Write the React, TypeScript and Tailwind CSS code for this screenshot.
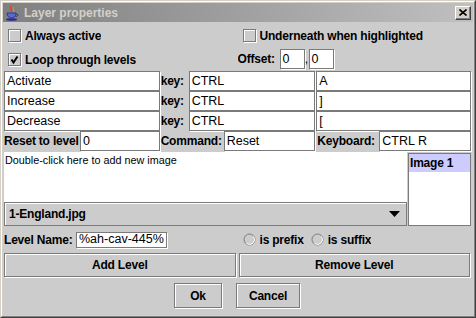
import React from 'react';

const field = 'border border-[#7a7a7a] bg-white shadow-[1px_1px_0_#ffffff] px-[2px] text-[12.5px] leading-none flex items-center overflow-hidden whitespace-nowrap';
const label = 'font-bold text-[12px] tracking-[-0.2px] whitespace-nowrap overflow-hidden';

function CheckBox({ checked }: { checked?: boolean }) {
    return (
        <span className="relative inline-block w-[13px] h-[13px] shrink-0 border border-[#7a7a7a] bg-[#cccccc] shadow-[inset_1px_1px_0_#ffffff,1px_1px_0_#ffffff]">
            {checked && (
                <svg width="11" height="11" viewBox="0 0 11 11" className="absolute left-0 top-0">
                    <path d="M2.5 5.5 L4.5 8.5 L8.5 2.5" stroke="#000" strokeWidth="2" fill="none" />
                </svg>
            )}
        </span>
    );
}

function Radio() {
    return (
        <svg width="13" height="13" viewBox="0 0 13 13" className="shrink-0">
            <circle cx="6.5" cy="6.5" r="5.5" fill="#cccccc" stroke="#7a7a7a" strokeWidth="1" />
            <path d="M10.5 3.5 A5 5 0 0 1 3.5 10.5" stroke="#ffffff" strokeWidth="1" fill="none" />
        </svg>
    );
}

function Btn({ children, className }: { children: React.ReactNode; className?: string }) {
    return (
        <div className={`border border-[#7a7a7a] bg-[#cccccc] shadow-[inset_1px_1px_0_#ffffff,1px_1px_0_#ffffff] flex items-center justify-center font-bold text-[12px] tracking-[-0.2px] ${className ?? ''}`}>
            {children}
        </div>
    );
}

function JavaIcon() {
    return (
        <svg width="16" height="16" viewBox="0 0 16 16">
            <path d="M7 1 C5 3 9 4 7 7" stroke="#e04020" strokeWidth="1.4" fill="none" />
            <path d="M9.5 2 C8 4 11 5 9.5 7" stroke="#f08030" strokeWidth="1.2" fill="none" />
            <path d="M3 8 H12 C12 11 10 13 7.5 13 C5 13 3 11 3 8 Z" fill="#5a6ad0" stroke="#2a2a90" strokeWidth="0.8" />
            <path d="M12 9 C14.5 9 14.5 11.5 11.5 11.5" stroke="#2a2a90" strokeWidth="1" fill="none" />
            <ellipse cx="7.5" cy="14.5" rx="5.5" ry="1.2" fill="#2a2a90" />
        </svg>
    );
}

export default function App() {
    return (
        <div className="w-[476px] h-[318px] border border-t-[#d4d0c8] border-l-[#d4d0c8] border-r-[#404040] border-b-[#404040] bg-[#d4d0c8] overflow-hidden" style={{ fontFamily: '"Liberation Sans", Arial, sans-serif' }}>
            <div className="h-full border border-t-white border-l-white border-r-[#808080] border-b-[#808080] p-[1px] flex flex-col">
                {/* title bar */}
                <div className="h-[19px] shrink-0 bg-gradient-to-r from-[#808080] to-[#c0c0c0] flex items-center pl-[1px] pr-[2px]">
                    <JavaIcon />
                    <span className="ml-[4px] text-[12px] font-bold text-[#d4d0c8]">Layer properties</span>
                    <div className="ml-auto w-[16px] h-[14px] bg-[#d4d0c8] border border-t-white border-l-white border-r-[#404040] border-b-[#404040] shadow-[inset_-1px_-1px_0_#808080] flex items-center justify-center">
                        <svg width="8" height="7" viewBox="0 0 8 7">
                            <path d="M0.5 0.5 L7.5 6.5 M7.5 0.5 L0.5 6.5" stroke="#000" strokeWidth="1.6" />
                        </svg>
                    </div>
                </div>

                {/* content */}
                <div className="flex-1 bg-[#cccccc] pl-[1px] pr-[2px] flex flex-col text-black">
                    <div className="h-[26px] grid grid-cols-2 items-center">
                        <div className="flex items-center pl-[4px] gap-[4px] pt-[1px]">
                            <CheckBox />
                            <span className={label}>Always active</span>
                        </div>
                        <div className="flex items-center pl-[5px] gap-[4px] pt-[1px]">
                            <CheckBox />
                            <span className={label}>Underneath when highlighted</span>
                        </div>
                    </div>
                    <div className="h-[22px] grid grid-cols-2 items-center">
                        <div className="flex items-center pl-[4px] gap-[4px] pt-[1px]">
                            <CheckBox checked />
                            <span className={label}>Loop through levels</span>
                        </div>
                        <div className="flex items-center h-[20px]">
                            <span className={`${label} w-[42px]`}>Offset:</span>
                            <div className={`${field} w-[25px] h-[20px]`}>0</div>
                            <span className="w-[4px] text-[12px] text-center">,</span>
                            <div className={`${field} w-[25px] h-[20px]`}>0</div>
                        </div>
                    </div>

                    <div className="mt-[1px] grid grid-cols-3 grid-rows-[20px_20px_20px_20px]">
                        <div className={field}>Activate</div>
                        <div className="flex">
                            <span className={`${label} w-[29px] pl-[1px] flex items-center`}>key:</span>
                            <div className={`${field} flex-1`}>CTRL</div>
                        </div>
                        <div className={`${field} ml-[1px]`}>A</div>

                        <div className={field}>Increase</div>
                        <div className="flex">
                            <span className={`${label} w-[29px] pl-[1px] flex items-center`}>key:</span>
                            <div className={`${field} flex-1`}>CTRL</div>
                        </div>
                        <div className={`${field} ml-[1px]`}>]</div>

                        <div className={field}>Decrease</div>
                        <div className="flex">
                            <span className={`${label} w-[29px] pl-[1px] flex items-center`}>key:</span>
                            <div className={`${field} flex-1`}>CTRL</div>
                        </div>
                        <div className={`${field} ml-[1px]`}>[</div>

                        <div className="flex">
                            <span className={`${label} w-[76px] flex items-center`}>Reset to level</span>
                            <div className={`${field} flex-1`}>0</div>
                        </div>
                        <div className="flex">
                            <span className={`${label} w-[64px] pl-[1px] flex items-center`}>Command:</span>
                            <div className={`${field} flex-1`}>Reset</div>
                        </div>
                        <div className="flex">
                            <span className={`${label} w-[64px] pl-[2px] flex items-center`}>Keyboard:</span>
                            <div className={`${field} flex-1`}>CTRL R</div>
                        </div>
                    </div>

                    <div className="mt-[1px] h-[74px] flex gap-[1px]">
                        <div className="flex-1 flex flex-col">
                            <div className="flex-1 bg-white text-[10.8px] px-[1px] pt-[2px] leading-tight">Double-click here to add new image</div>
                            <div className="h-[24px] border border-[#7a7a7a] bg-[#cccccc] shadow-[inset_1px_1px_0_#ffffff] flex items-center pl-[4px] pr-[6px]">
                                <span className="font-bold text-[12px] tracking-[-0.2px]">1-England.jpg</span>
                                <svg width="11" height="6" viewBox="0 0 11 6" className="ml-auto">
                                    <path d="M0 0 H11 L5.5 6 Z" fill="#000" />
                                </svg>
                            </div>
                        </div>
                        <div className="w-[63px] mt-[1px] border border-[#7a7a7a] bg-white">
                            <div className="h-[18px] bg-[#ccccff] font-bold text-[12px] tracking-[-0.2px] pl-[1px] flex items-center">Image 1</div>
                        </div>
                    </div>

                    <div className="h-[27px] grid grid-cols-2 items-center">
                        <div className="flex items-center">
                            <span className={`${label} w-[72px]`}>Level Name:</span>
                            <div className={`${field} w-[91px] h-[16px]`}>%ah-cav-445%</div>
                        </div>
                        <div className="flex items-center pl-[5px]">
                            <Radio />
                            <span className={`${label} ml-[4px]`}>is prefix</span>
                            <span className="ml-[7px]"><Radio /></span>
                            <span className={`${label} ml-[4px]`}>is suffix</span>
                        </div>
                    </div>

                    <div className="h-[24px] flex gap-[3px] mr-[1px]">
                        <Btn className="flex-1">Add Level</Btn>
                        <Btn className="flex-1">Remove Level</Btn>
                    </div>

                    <div className="mt-[6px] flex justify-center gap-[14px] pr-[1px]">
                        <Btn className="w-[48px] h-[25px]">Ok</Btn>
                        <Btn className="w-[64px] h-[25px]">Cancel</Btn>
                    </div>
                </div>
            </div>
        </div>
    );
}
